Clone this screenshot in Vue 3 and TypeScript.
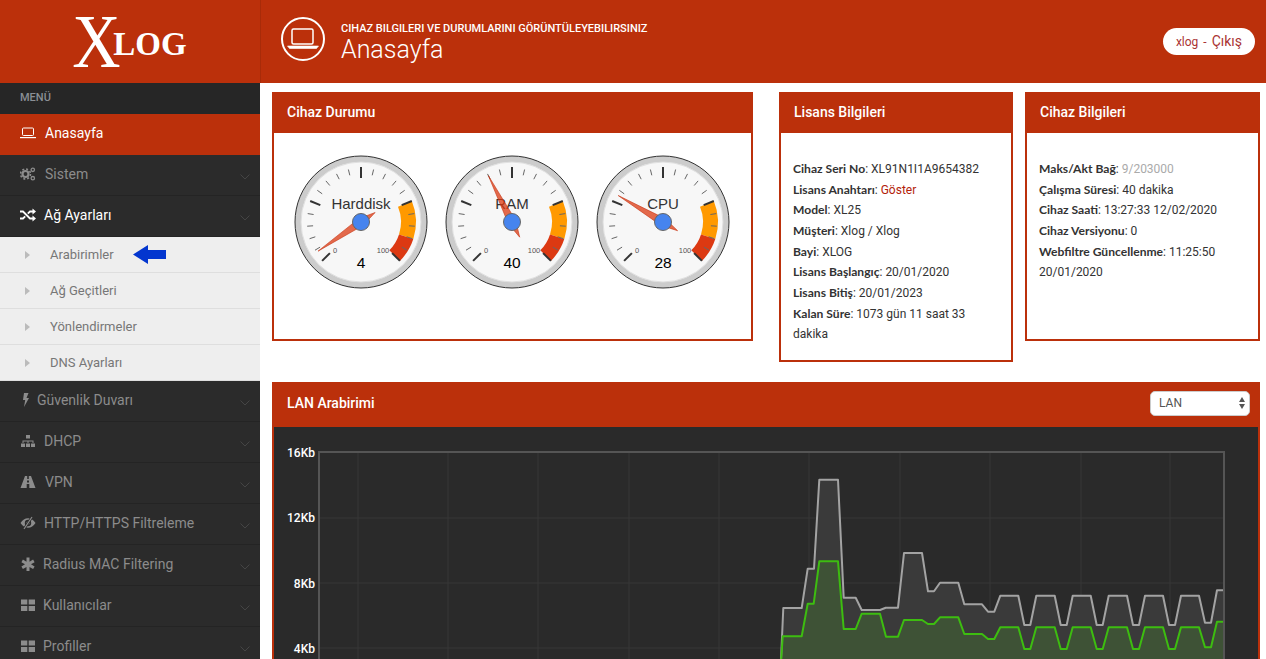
<template>
  <div class="page">
    <header class="topbar">
      <div class="brand">
        <span class="logo-x">X</span><span class="logo-rest">LOG</span>
      </div>
      <div class="head-main">
        <div class="head-icon">
          <svg width="32" height="22" viewBox="0 0 32 22" fill="none" stroke="#fff">
            <rect x="5" y="1" width="21" height="15" rx="1.5" stroke-width="1.5" />
            <path d="M0.5 18h31l-2 2.5H2.500z" fill="#fff" stroke-width="0.6" />
          </svg>
        </div>
        <div class="head-text">
          <div class="head-sub">CIHAZ BILGILERI VE DURUMLARINI GÖRÜNTÜLEYEBILIRSINIZ</div>
          <h1 class="head-title">Anasayfa</h1>
        </div>
        <div class="user-pill">xlog - <span class="logout">Çıkış</span></div>
      </div>
    </header>

    <div class="body-row">
      <aside class="sidebar">
        <div class="menu-label">MENÜ</div>
        <template v-for="item in menu" :key="item.title">
          <div :class="['menu-item', { active: item.active, bright: item.bright }]">
            <svg class="menu-icon" viewBox="0 0 16 16" width="16" height="16" v-html="icons[item.icon]"></svg>
            <span class="menu-title" :style="{ marginLeft: item.gap + 'px' }">{{ item.title }}</span>
            <svg v-if="!item.active" class="chev" width="10" height="6" viewBox="0 0 10 6" fill="none">
              <path d="M0.500 0.500L5 5l4.500-4.500" stroke="#454545" />
            </svg>
          </div>
          <ul v-if="item.children" class="submenu">
            <li v-for="(child, i) in item.children" :key="child" class="sub-item">
              <span class="sub-arrow"></span>
              <span>{{ child }}</span>
              <svg v-if="i === 0" class="blue-arrow" width="33" height="19" viewBox="0 0 33 19">
                <path d="M0 9.500L15 0v5h18v9H15v5z" fill="#0336cf" />
              </svg>
            </li>
          </ul>
        </template>
      </aside>

      <main class="content">
        <div class="cards">
          <section class="panel gauge-panel">
            <div class="panel-head">Cihaz Durumu</div>
            <div class="gauges">
              <svg v-for="g in gauges" :key="g.label" class="gauge" width="136" height="136" viewBox="0 0 136 136">
                <circle cx="68" cy="68" r="66" fill="#ccc" stroke="#333" stroke-width="1" />
                <circle cx="68" cy="68" r="60" fill="#f7f7f7" stroke="#e0e0e0" stroke-width="1" />
                <path :d="arc(75, 90)" fill="#ff9900" />
                <path :d="arc(90, 100)" fill="#dc3912" />
                <line v-for="t in minorTicks" :key="'m' + t" v-bind="tick(t, 54, 48)" stroke="#666" stroke-width="1" />
                <line v-for="t in majorTicks" :key="'j' + t" v-bind="tick(t, 55, 44)" stroke="#333" stroke-width="2" />
                <text x="68" y="55" text-anchor="middle" class="g-label">{{ g.label }}</text>
                <text x="42" y="99" text-anchor="middle" class="g-scale">0</text>
                <text x="90" y="99" text-anchor="middle" class="g-scale">100</text>
                <text x="68" y="114" text-anchor="middle" class="g-value">{{ g.value }}</text>
                <polygon :points="needle(g.value)" fill="#dc3912" fill-opacity="0.75" stroke="#c63310" stroke-width="0.6" />
                <circle cx="68" cy="68" r="8.500" fill="#4684ee" stroke="#666" stroke-width="1" />
              </svg>
            </div>
          </section>

          <section class="panel license-panel">
            <div class="panel-head">Lisans Bilgileri</div>
            <div class="info">
              <template v-for="row in license" :key="row.k">
                <div><b>{{ row.k }}</b>: <span :class="row.cls">{{ row.v }}</span></div>
                <div v-if="row.tail">{{ row.tail }}</div>
              </template>
            </div>
          </section>

          <section class="panel device-panel">
            <div class="panel-head">Cihaz Bilgileri</div>
            <div class="info">
              <template v-for="row in device" :key="row.k">
                <div><b>{{ row.k }}</b>: <span :class="row.cls">{{ row.v }}</span></div>
                <div v-if="row.tail">{{ row.tail }}</div>
              </template>
            </div>
          </section>
        </div>

        <section class="panel chart-panel">
          <div class="panel-head chart-head">
            <span>LAN Arabirimi</span>
            <div class="iface-wrap">
              <select class="iface"><option>LAN</option></select>
              <span class="iface-arrows"></span>
            </div>
          </div>
          <div class="chart-wrap">
            <svg width="984" height="240" viewBox="0 0 984 240">
              <g stroke="#373737" stroke-width="1">
                <line v-for="x in gridX" :key="x" :x1="x" y1="25" :x2="x" y2="240" />
                <line v-for="y in [91, 156, 221]" :key="y" x1="45" :y1="y" x2="950" :y2="y" />
              </g>
              <path :d="grayPath + ' V240 H507 Z'" fill="#3a3a3a" />
              <path :d="greenPath + ' V240 H507 Z'" fill="#3e5236" />
              <path d="M45 240V25H950V240" fill="none" stroke="#555" stroke-width="2" />
              <path :d="grayPath" fill="none" stroke="#a3a3a3" stroke-width="2" stroke-linejoin="round" />
              <path :d="greenPath" fill="none" stroke="#3dbd10" stroke-width="2" stroke-linejoin="round" />
              <text v-for="l in yLabels" :key="l.t" x="41" :y="l.y" text-anchor="end" class="y-label">{{ l.t }}</text>
            </svg>
          </div>
        </section>
      </main>
    </div>
  </div>
</template>

<script setup lang="ts">
interface MenuItem {
  title: string
  icon: string
  gap: number
  active?: boolean
  bright?: boolean
  children?: string[]
}

interface InfoRow {
  k: string
  v: string
  cls?: string
  tail?: string
}

const icons: Record<string, string> = {
  laptop: '<rect x="2.500" y="3" width="11" height="7.500" rx="1" fill="none" stroke="currentColor"/><path d="M0 12h16v1.200H0z" fill="currentColor"/>',
  cogs: '<circle cx="5.500" cy="8" r="3" fill="none" stroke="currentColor" stroke-width="2.200"/><circle cx="5.500" cy="8" r="5" fill="none" stroke="currentColor" stroke-width="1.600" stroke-dasharray="2 1.930"/><circle cx="12.800" cy="3.800" r="1.700" fill="none" stroke="currentColor" stroke-width="1.300"/><circle cx="12.800" cy="12.200" r="1.700" fill="none" stroke="currentColor" stroke-width="1.300"/>',
  random: '<path d="M0 4.500h3l7 7h3M0 11.500h3l2.200-2.200M7.800 6.700 10 4.500h3" fill="none" stroke="currentColor" stroke-width="1.800"/><path d="M12.500 1.500 16 4.500l-3.500 3zM12.500 8.500 16 11.500l-3.500 3z" fill="currentColor"/>',
  bolt: '<path d="M4 1h4.500L6.500 6H9l-5 9 1.200-7H3z" fill="currentColor"/>',
  sitemap: '<path d="M6 2h4v3.500H6zM1 10.500h4V14H1zM6 10.500h4V14H6zM11 10.500h4V14h-4zM2.500 10V7.500h11V10h-1V8.500H8.500V10h-1V8.500H3.500V10z" fill="currentColor"/>',
  road: '<path d="M5 2h2.200v3h1.600V2H11l4.500 12H9.300V10H6.700v4H.5zM7 6.500h2v2H7z" fill="currentColor" fill-rule="evenodd"/>',
  eye: '<path d="M0.500 8C2.500 5 5 3.200 8 3.200S13.500 5 15.500 8C13.500 11 11 12.800 8 12.800S2.500 11 0.500 8zM8 4.800A3.200 3.200 0 1 0 8 11.200 3.200 3.200 0 0 0 8 4.800z" fill="currentColor" fill-rule="evenodd"/><circle cx="8" cy="8" r="1.600" fill="currentColor"/><path d="M4 14 12 2" stroke="#2b2b2b" stroke-width="2.600"/><path d="M4 14 12 2" stroke="currentColor" stroke-width="1.200"/>',
  asterisk: '<path d="M6.500 1.500h3v4.200l3.600-2.100 1.500 2.600L11 8.300l3.600 2.100-1.500 2.600-3.600-2.100v4.100h-3V11L2.900 13 1.400 10.400 5 8.300 1.400 6.200l1.500-2.600 3.600 2.100z" fill="currentColor"/>',
  grid: '<path d="M1 2.500h6.300v5H1zM8.700 2.500H15v5H8.700zM1 9h6.300v5H1zM8.700 9H15v5H8.700z" fill="currentColor"/>',
}

const menu: MenuItem[] = [
  { title: 'Anasayfa', icon: 'laptop', gap: 9, active: true },
  { title: 'Sistem', icon: 'cogs', gap: 9 },
  {
    title: 'Ağ Ayarları',
    icon: 'random',
    gap: 8,
    bright: true,
    children: ['Arabirimler', 'Ağ Geçitleri', 'Yönlendirmeler', 'DNS Ayarları'],
  },
  { title: 'Güvenlik Duvarı', icon: 'bolt', gap: 1 },
  { title: 'DHCP', icon: 'sitemap', gap: 8 },
  { title: 'VPN', icon: 'road', gap: 9 },
  { title: 'HTTP/HTTPS Filtreleme', icon: 'eye', gap: 8 },
  { title: 'Radius MAC Filtering', icon: 'asterisk', gap: 7 },
  { title: 'Kullanıcılar', icon: 'grid', gap: 7 },
  { title: 'Profiller', icon: 'grid', gap: 7 },
]

const gauges = [
  { label: 'Harddisk', value: 4 },
  { label: 'RAM', value: 40 },
  { label: 'CPU', value: 28 },
]

const license: InfoRow[] = [
  { k: 'Cihaz Seri No', v: 'XL91N1I1A9654382' },
  { k: 'Lisans Anahtarı', v: 'Göster', cls: 'link' },
  { k: 'Model', v: 'XL25' },
  { k: 'Müşteri', v: 'Xlog / Xlog' },
  { k: 'Bayi', v: 'XLOG' },
  { k: 'Lisans Başlangıç', v: '20/01/2020' },
  { k: 'Lisans Bitiş', v: '20/01/2023' },
  { k: 'Kalan Süre', v: '1073 gün 11 saat 33', tail: 'dakika' },
]

const device: InfoRow[] = [
  { k: 'Maks/Akt Bağ', v: '9/203000', cls: 'muted' },
  { k: 'Çalışma Süresi', v: '40 dakika' },
  { k: 'Cihaz Saati', v: '13:27:33 12/02/2020' },
  { k: 'Cihaz Versiyonu', v: '0' },
  { k: 'Webfiltre Güncellenme', v: '11:25:50', tail: '20/01/2020' },
]

// gauge scale runs 270 degrees, value 0 sits at lower left
const toAngle = (v: number) => ((v * 2.7 + 135) * Math.PI) / 180
const pt = (v: number, r: number) => [68 + r * Math.cos(toAngle(v)), 68 + r * Math.sin(toAngle(v))]
const f = (n: number) => n.toFixed(1)

const arc = (from: number, to: number) => {
  const [ax, ay] = pt(from, 55)
  const [bx, by] = pt(to, 55)
  const [cx, cy] = pt(to, 40)
  const [dx, dy] = pt(from, 40)
  return `M${f(ax)} ${f(ay)}A55 55 0 0 1 ${f(bx)} ${f(by)}L${f(cx)} ${f(cy)}A40 40 0 0 0 ${f(dx)} ${f(dy)}Z`
}

const tick = (v: number, r1: number, r2: number) => {
  const [x1, y1] = pt(v, r1)
  const [x2, y2] = pt(v, r2)
  return { x1: f(x1), y1: f(y1), x2: f(x2), y2: f(y2) }
}

const majorTicks = [0, 25, 50, 75, 100]
const minorTicks = Array.from({ length: 21 }, (_, i) => i * 5).filter((v) => v % 25 !== 0)

const needle = (v: number) => {
  const [tx, ty] = pt(v, 52)
  const [bx, by] = pt(v + 33.3, 4)
  const [ex, ey] = pt(v + 66.7, 17)
  const [cx, cy] = pt(v - 33.3, 4)
  return `${f(tx)},${f(ty)} ${f(bx)},${f(by)} ${f(ex)},${f(ey)} ${f(cx)},${f(cy)}`
}

const gridX = [84, 174, 264, 355, 445, 535, 626, 716, 807, 896]

const yLabels = [
  { t: '16Kb', y: 30 },
  { t: '12Kb', y: 95 },
  { t: '8Kb', y: 161 },
  { t: '4Kb', y: 226 },
]

// points measured on a 3x crop of the traffic plot
const toPath = (pts: number[][]) =>
  'M' + pts.map(([x, y]) => `${f(496 + x / 3)} ${f(23 + y / 3)}`).join('L')

const grayPts = [
  [32, 650], [40, 474], [95, 474], [113, 356], [132, 356], [148, 89], [204, 89], [221, 443], [257, 443], [275, 480],
  [330, 480], [347, 473], [384, 473], [402, 309], [456, 309], [474, 424], [492, 424], [510, 398], [565, 398], [583, 463],
  [636, 463], [654, 485], [673, 485], [691, 437], [745, 437], [763, 525], [781, 525], [799, 437], [854, 437], [872, 525],
  [890, 525], [908, 437], [962, 437], [980, 525], [998, 525], [1016, 437], [1071, 437], [1089, 525], [1107, 525], [1125, 437],
  [1179, 437], [1197, 525], [1215, 525], [1233, 437], [1287, 437], [1305, 518], [1323, 518], [1341, 421], [1359, 421],
]

const greenPts = [
  [32, 650], [38, 559], [95, 559], [113, 461], [131, 461], [148, 334], [204, 334], [221, 537], [257, 537], [275, 491],
  [330, 491], [348, 560], [384, 560], [402, 510], [456, 510], [474, 522], [492, 522], [510, 502], [565, 502], [583, 552],
  [636, 552], [654, 567], [673, 567], [691, 532], [745, 532], [763, 597], [781, 597], [799, 532], [854, 532], [872, 597],
  [890, 597], [908, 532], [962, 532], [980, 597], [998, 597], [1016, 532], [1071, 532], [1089, 597], [1107, 597], [1125, 532],
  [1179, 532], [1197, 597], [1215, 597], [1233, 532], [1287, 532], [1305, 592], [1323, 592], [1341, 515], [1359, 515],
]

const grayPath = toPath(grayPts)
const greenPath = toPath(greenPts)
</script>

<style>
html,
body {
  margin: 0;
  overflow: hidden;
  background: #fff;
}
</style>

<style scoped>
.page {
  width: 1266px;
  height: 659px;
  overflow: hidden;
  font-family: Roboto, "Liberation Sans", sans-serif;
}

.topbar {
  display: flex;
  height: 83px;
  background: #bb300b;
  color: #fff;
}

.brand {
  width: 261px;
  flex: none;
  display: flex;
  align-items: flex-end;
  justify-content: center;
  box-sizing: border-box;
  padding-right: 4px;
  font-family: "Liberation Serif", serif;
  font-weight: 700;
  border-right: 1px solid #a82b09;
}

.logo-x {
  font-size: 76px;
  line-height: 60px;
  font-weight: 400;
  margin-bottom: 12px;
  transform: scaleX(0.88);
}

.logo-rest {
  font-size: 33px;
  line-height: 36px;
  margin-left: -11px;
  margin-bottom: 21px;
}

.head-main {
  flex: 1;
  display: flex;
  align-items: center;
  padding: 0 11px 0 20px;
}

.head-icon {
  width: 44px;
  height: 44px;
  box-sizing: border-box;
  border: 2px solid #fff;
  border-radius: 50%;
  display: flex;
  align-items: center;
  justify-content: center;
  margin: 0 16px 5px 0;
}

.head-text {
  flex: 1;
}

.head-sub {
  font-size: 11px;
  line-height: 14px;
  margin-top: 1px;
  font-weight: 500;
}

.head-title {
  margin: 0;
  font-size: 25px;
  font-weight: 300;
  line-height: 27px;
}

.user-pill {
  background: #fff;
  border-radius: 14px;
  height: 27px;
  line-height: 27px;
  padding: 0 13px;
  font-size: 12px;
  word-spacing: 2px;
  color: #a33;
}

.logout {
  font-size: 14px;
}

.body-row {
  display: flex;
}

.sidebar {
  width: 260px;
  flex: none;
  background: #2b2b2b;
  height: 576px;
}

.menu-label {
  height: 31px;
  line-height: 29px;
  padding-left: 20px;
  font-size: 11px;
  font-weight: 500;
  color: #8a8f95;
  background: #262626;
}

.menu-item {
  height: 41px;
  box-sizing: border-box;
  display: flex;
  align-items: center;
  padding: 0 10px 2px 20px;
  font-size: 14px;
  color: #8c8c8c;
  background: #2b2b2b;
  border-bottom: 1px solid #242424;
}

.menu-item.active {
  background: #bb300b;
  color: #fff;
  border-bottom: none;
  padding-bottom: 3px;
}

.menu-item.bright {
  color: #fff;
}

.menu-icon {
  flex: none;
}

.menu-title {
  flex: 1;
}

.chev {
  margin-top: 5px;
}

.submenu {
  list-style: none;
  margin: 0;
  padding: 0;
  background: #eee;
}

.sub-item {
  height: 36px;
  box-sizing: border-box;
  display: flex;
  align-items: center;
  padding-left: 25px;
  font-size: 13px;
  color: #777;
  border-bottom: 1px solid #dedede;
}

.sub-arrow {
  width: 0;
  height: 0;
  border-left: 5px solid #bbb;
  border-top: 4px solid transparent;
  border-bottom: 4px solid transparent;
  margin-right: 20px;
}

.blue-arrow {
  margin-left: 19px;
}

.content {
  flex: 1;
  min-width: 0;
  padding: 9px 6px 0 12px;
}

.cards {
  display: flex;
  align-items: flex-start;
}

.panel {
  box-sizing: border-box;
  border: 2px solid #bb300b;
  background: #fff;
}

.panel-head {
  background: #bb300b;
  color: #fff;
  height: 39px;
  line-height: 37px;
  padding-left: 13px;
  font-size: 14px;
  font-weight: 500;
}

.gauge-panel {
  width: 481px;
  height: 249px;
  margin-right: 26px;
}

.license-panel {
  width: 234px;
  height: 270px;
  margin-right: 12px;
}

.device-panel {
  width: 235px;
  height: 249px;
}

.gauges {
  display: flex;
  padding: 21px 0 0 19px;
  gap: 15px;
}

.gauge {
  flex: none;
}

.g-label {
  font-family: "Liberation Sans", sans-serif;
  font-size: 15px;
  fill: #333;
}

.g-scale {
  font-family: "Liberation Sans", sans-serif;
  font-size: 7.500px;
  fill: #555;
}

.g-value {
  font-family: "Liberation Sans", sans-serif;
  font-size: 15.500px;
  fill: #000;
}

.info {
  padding: 26px 12px 0 12px;
  font-size: 12px;
  line-height: 20.650px;
  color: #333;
}

.info b {
  font-family: Lato, sans-serif;
  font-weight: 700;
  font-size: 12.100px;
}

.link {
  color: #b3220a;
}

.muted {
  color: #aaa;
}

.chart-panel {
  margin-top: 20px;
  height: 300px;
  background: #2a2a2a;
}

.chart-head {
  height: 43px;
  line-height: 38px;
  display: flex;
  justify-content: space-between;
  align-items: center;
  padding: 0 8px 5px 13px;
  box-sizing: border-box;
}

.iface-wrap {
  position: relative;
  width: 100px;
  height: 25px;
}

.iface {
  appearance: none;
  display: block;
  width: 100%;
  height: 100%;
  background: #fff;
  border: 1px solid #ccc;
  border-radius: 5px;
  font-family: Roboto, sans-serif;
  font-size: 12px;
  color: #555;
  padding-left: 8px;
}

.iface-arrows {
  position: absolute;
  right: 5px;
  top: 7px;
  width: 0;
  height: 0;
  border-left: 3px solid transparent;
  border-right: 3px solid transparent;
  border-top: 5px solid #555;
  margin-top: 6px;
}

.iface-arrows::before {
  content: "";
  position: absolute;
  left: -3px;
  top: -12px;
  width: 0;
  height: 0;
  border-left: 3px solid transparent;
  border-right: 3px solid transparent;
  border-bottom: 5px solid #555;
}

.chart-wrap {
  height: 240px;
  overflow: hidden;
}

.y-label {
  font-size: 12px;
  font-weight: 500;
  fill: #fff;
}
</style>
